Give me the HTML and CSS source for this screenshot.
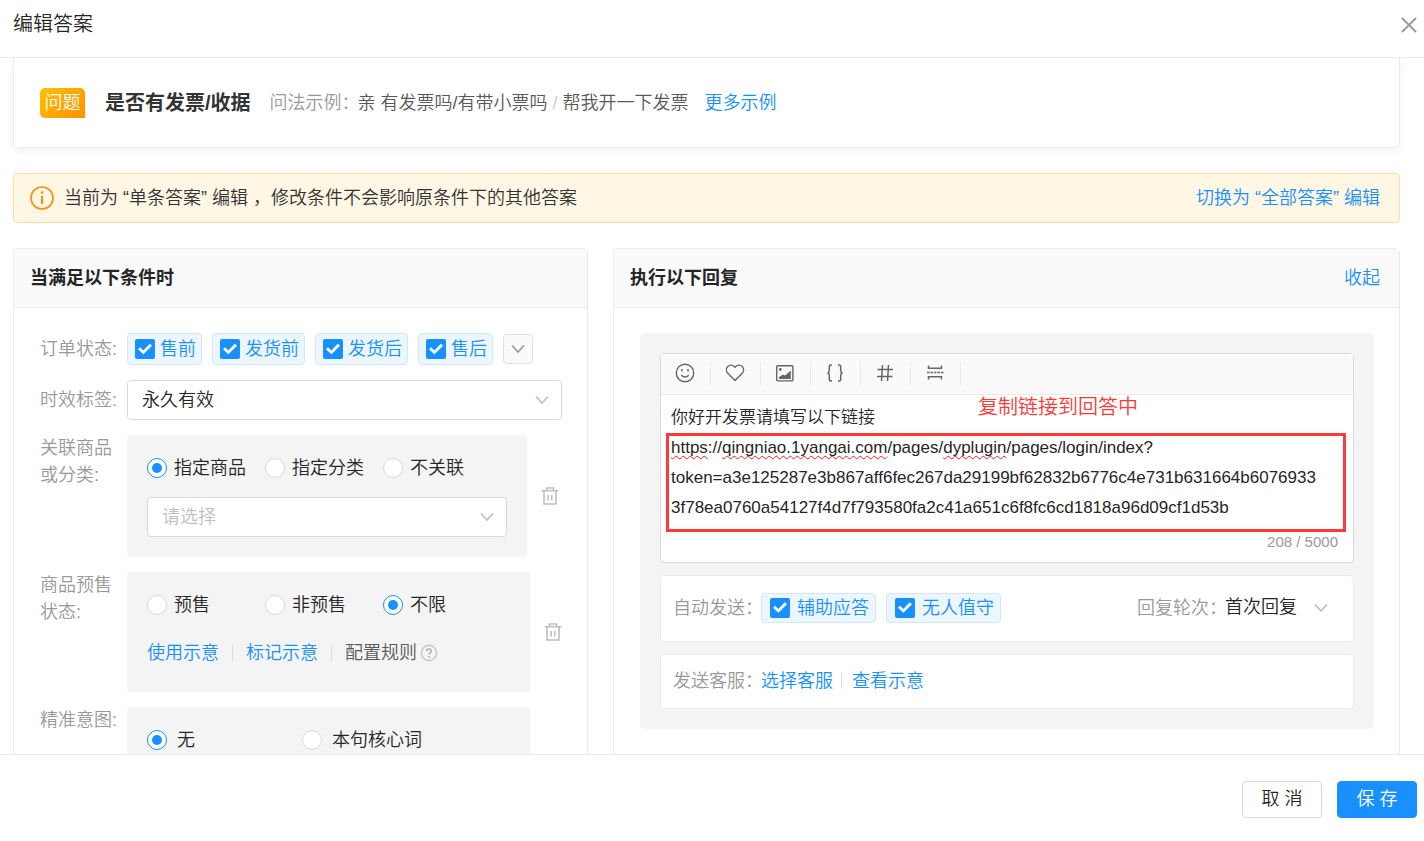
FILE: index.html
```html
<!DOCTYPE html>
<html lang="zh-CN">
<head>
<meta charset="utf-8">
<meta name="viewport" content="width=device-width, initial-scale=1">
<title>编辑答案</title>
<link rel="stylesheet" href="styles.css">
</head>
<body>
<svg class="sprite" aria-hidden="true">
  <symbol id="i-down" viewBox="0 0 14 14"><path d="M1 3.5l6 6.5 6-6.5" fill="none" stroke="currentColor" stroke-width="1.7"/></symbol>
  <symbol id="i-trash" viewBox="0 0 18 18"><path d="M.5 3.7h17M5.500 3.500V1h7v2.500M3 4v13h12V4M7.200 8v5.500M10.800 8v5.500" fill="none" stroke="currentColor" stroke-width="1.6"/></symbol>
</svg>

<header class="dialog-header">
  <h1 class="dialog-title">编辑答案</h1>
  <button class="icon-button close" type="button" aria-label="关闭">
    <svg width="16" height="16" viewBox="0 0 16 16"><path d="M1 1l14 14M15 1L1 15" fill="none" stroke="currentColor" stroke-width="1.8"/></svg>
  </button>
</header>

<main class="dialog-body">
  <section class="question">
    <span class="badge">问题</span>
    <h2 class="question-title">是否有发票/收据</h2>
    <span class="question-label">问法示例：</span>
    <span class="question-sample">亲 有发票吗/有带小票吗 <i class="slash">/</i> 帮我开一下发票</span>
    <a class="link" href="#">更多示例</a>
  </section>

  <div class="alert" role="status">
    <svg class="alert-icon" width="24" height="24" viewBox="0 0 24 24"><circle cx="12" cy="12" r="11" fill="none" stroke="currentColor" stroke-width="1.7"/><circle cx="12" cy="6.6" r="1.3" fill="currentColor"/><path d="M12 9.8v8.2" stroke="currentColor" stroke-width="2"/></svg>
    <p class="alert-text">当前为 “单条答案” 编辑 ，修改条件不会影响原条件下的其他答案</p>
    <a class="link" href="#">切换为 “全部答案” 编辑</a>
  </div>

  <div class="columns">
    <section class="panel">
      <header class="panel-header"><h2 class="panel-title">当满足以下条件时</h2></header>
      <form class="panel-body conditions">
        <div class="row row-center">
          <span class="row-label">订单状态:</span>
          <div class="chips">
            <label class="chip"><input class="check" type="checkbox" checked>售前</label>
            <label class="chip"><input class="check" type="checkbox" checked>发货前</label>
            <label class="chip"><input class="check" type="checkbox" checked>发货后</label>
            <label class="chip"><input class="check" type="checkbox" checked>售后</label>
            <button class="expand" type="button" aria-label="展开"><svg width="14" height="14"><use href="#i-down"/></svg></button>
          </div>
        </div>

        <div class="row row-center">
          <label class="row-label" for="validity">时效标签:</label>
          <div class="select-wrap">
            <select class="select" id="validity"><option>永久有效</option></select>
            <svg class="select-arrow" width="14" height="14"><use href="#i-down"/></svg>
          </div>
        </div>

        <div class="row">
          <span class="row-label">关联商品<br>或分类:</span>
          <div class="box">
            <div class="radios">
              <label class="radio-item"><input class="radio" type="radio" name="goods" checked>指定商品</label>
              <label class="radio-item"><input class="radio" type="radio" name="goods">指定分类</label>
              <label class="radio-item"><input class="radio" type="radio" name="goods">不关联</label>
            </div>
            <div class="select-wrap box-select">
              <select class="select placeholder" aria-label="关联商品"><option>请选择</option></select>
              <svg class="select-arrow" width="14" height="14"><use href="#i-down"/></svg>
            </div>
          </div>
          <button class="icon-button trash trash-wide" type="button" aria-label="删除"><svg width="18" height="18"><use href="#i-trash"/></svg></button>
        </div>

        <div class="row">
          <span class="row-label">商品预售<br>状态:</span>
          <div class="box">
            <div class="radios">
              <label class="radio-item"><input class="radio" type="radio" name="presale">预售</label>
              <label class="radio-item"><input class="radio" type="radio" name="presale">非预售</label>
              <label class="radio-item"><input class="radio" type="radio" name="presale" checked>不限</label>
            </div>
            <div class="hints">
              <a class="link" href="#">使用示意</a>
              <span class="divider"></span>
              <a class="link" href="#">标记示意</a>
              <span class="divider"></span>
              <span class="rule">配置规则
                <svg width="18" height="18" viewBox="0 0 18 18"><circle cx="9" cy="9" r="7.6" fill="none" stroke="#bfbfbf" stroke-width="1.2"/><path d="M6.7 7.2c0-3 4.6-3 4.6-.2 0 1.6-2.3 1.8-2.3 3.6" fill="none" stroke="#a6a6a6" stroke-width="1.3"/><circle cx="9" cy="12.8" r=".9" fill="#a6a6a6"/></svg>
              </span>
            </div>
          </div>
          <button class="icon-button trash" type="button" aria-label="删除"><svg width="18" height="18"><use href="#i-trash"/></svg></button>
        </div>

        <div class="row">
          <span class="row-label">精准意图:</span>
          <div class="box">
            <div class="radios radios-wide">
              <label class="radio-item"><input class="radio" type="radio" name="intent" checked>无</label>
              <label class="radio-item"><input class="radio" type="radio" name="intent">本句核心词</label>
            </div>
            <div class="hints"></div>
          </div>
          <button class="icon-button trash" type="button" aria-label="删除"><svg width="18" height="18"><use href="#i-trash"/></svg></button>
        </div>
      </form>
    </section>

    <section class="panel">
      <header class="panel-header">
        <h2 class="panel-title">执行以下回复</h2>
        <a class="link" href="#">收起</a>
      </header>
      <div class="panel-body">
        <div class="reply">
          <div class="editor">
            <div class="toolbar">
              <button class="tool" type="button" aria-label="表情"><svg width="20" height="20" viewBox="0 0 20 20"><g fill="none" stroke="currentColor" stroke-width="1.4"><circle cx="10" cy="10" r="8.7"/><path d="M6.3 12.2c1.4 2.4 6 2.4 7.4 0"/></g><path d="M7 6v2.6M13 6v2.6" stroke="currentColor" stroke-width="1.5"/></svg></button>
              <button class="tool" type="button" aria-label="收藏"><svg width="20" height="20" viewBox="0 0 20 20"><path d="M10 4.2C7.8 1.6 4.8 1.5 2.8 3.4.8 5.5 1 8.5 3 10.5l7 7 7-7c2-2 2.2-5 .2-7.1-2-1.9-5-1.8-7.2.8z" fill="none" stroke="currentColor" stroke-width="1.4" stroke-linejoin="round"/></svg></button>
              <button class="tool" type="button" aria-label="图片"><svg width="20" height="20" viewBox="0 0 20 20"><rect x="1.7" y="2.7" width="16.2" height="15.2" rx="1" fill="none" stroke="currentColor" stroke-width="1.4"/><circle cx="5.3" cy="6.5" r="1.4" fill="currentColor"/><path d="M4 16v-2l4-2.400 2 1 5.800-5V16z" fill="currentColor"/></svg></button>
              <button class="tool" type="button" aria-label="变量"><svg width="20" height="20" viewBox="0 0 20 20"><path d="M7 2H5.800C4.600 2 4.300 2.700 4.300 4v3.500C4.300 9 3.500 9.800 2.500 10c1 .2 1.800 1 1.800 2.500V16c0 1.300.3 2 1.500 2H7M13 2h1.200c1.200 0 1.500.7 1.500 2v3.500c0 1.500.8 2.300 1.800 2.500-1 .2-1.800 1-1.800 2.500V16c0 1.300-.3 2-1.500 2H13" fill="none" stroke="currentColor" stroke-width="1.5"/></svg></button>
              <button class="tool" type="button" aria-label="话题"><svg width="20" height="20" viewBox="0 0 20 20"><path d="M7.500 2l-1 16M13.500 2l-1 16M2.500 6.500h15.500M2 13.500h15.500" fill="none" stroke="currentColor" stroke-width="1.5"/></svg></button>
              <button class="tool" type="button" aria-label="分段"><svg width="20" height="20" viewBox="0 0 20 20"><g fill="none" stroke="currentColor" stroke-width="1.5"><path d="M3.500 2.500v2.800h13V2.500M3.500 16.500v-2.800h13v2.800"/><path d="M2 9.500h16.500" stroke-dasharray="2.500 1"/></g></svg></button>
            </div>
            <div class="editor-text" contenteditable="true" role="textbox" aria-multiline="true" aria-label="回复内容" spellcheck="false">你好开发票请填写以下链接<br><span class="typo">https</span>://<span class="typo">qingniao.1yangai.com</span>/pages/<span class="typo">dyplugin</span>/pages/login/index?<br>token=a3e125287e3b867aff6fec267da29199bf62832b6776c4e731b631664b6076933<br>3f78ea0760a54127f4d7f793580fa2c41a651c6f8fc6cd1818a96d09cf1d53b</div>
            <div class="counter">208 / 5000</div>
            <span class="note">复制链接到回答中</span>
            <span class="note-frame"></span>
          </div>

          <div class="card">
            <span class="card-label">自动发送：</span>
            <div class="chips">
              <label class="chip chip-roomy"><input class="check" type="checkbox" checked>辅助应答</label>
              <label class="chip chip-roomy"><input class="check" type="checkbox" checked>无人值守</label>
            </div>
            <div class="round">
              <label class="card-label" for="round">回复轮次：</label>
              <div class="select-wrap">
                <select class="select select-plain" id="round"><option>首次回复</option></select>
                <svg class="select-arrow" width="14" height="14"><use href="#i-down"/></svg>
              </div>
            </div>
          </div>

          <div class="card card-short">
            <span class="card-label">发送客服：</span>
            <a class="link" href="#">选择客服</a>
            <span class="divider divider-tight"></span>
            <a class="link" href="#">查看示意</a>
          </div>
        </div>
      </div>
    </section>
  </div>
</main>

<footer class="dialog-footer">
  <button class="button" type="button">取 消</button>
  <button class="button button-primary" type="button">保 存</button>
</footer>
</body>
</html>
```

FILE: styles.css
```css
* { box-sizing: border-box; }

body {
  display: flex;
  flex-direction: column;
  height: 100vh;
  margin: 0;
  overflow: hidden;
  background: #fff;
  color: #262626;
  font: 350 18px/26px "Liberation Sans", "Noto Sans CJK SC", sans-serif;
}

h1, h2, p { margin: 0; }
button, select, input { margin: 0; font: inherit; color: inherit; }
button { cursor: pointer; }
svg { display: block; flex: none; }

.sprite { position: absolute; width: 0; height: 0; }
.link { color: #1890ff; text-decoration: none; white-space: nowrap; }
.icon-button { padding: 0; border: 0; background: none; color: #bfbfbf; }

.dialog-header {
  display: flex;
  flex: none;
  align-items: center;
  justify-content: space-between;
  height: 58px;
  padding: 0 7px 10px 13px;
  border-bottom: 1px solid #ebebeb;
}
.dialog-title { font-size: 20px; font-weight: 350; line-height: 28px; }
.close { padding-top: 3px; color: #999; }

.dialog-body {
  flex: 1;
  min-height: 0;
  padding: 0 24px 0 13px;
  overflow: hidden;
}

.question {
  display: flex;
  align-items: center;
  padding: 30px 26px 29px;
  border: solid #ebebeb;
  border-width: 0 1px 1px;
  border-radius: 0 0 5px 5px;
  box-shadow: 0 3px 8px rgba(0, 0, 0, .06);
  white-space: nowrap;
}
.badge {
  width: 45px;
  margin-right: 20px;
  border-radius: 5px 5px 0 5px;
  background: linear-gradient(135deg, #ffc000, #ff9000);
  color: #fff;
  line-height: 30px;
  text-align: center;
}
.question-title { margin-right: 19px; color: #333; font-size: 20px; font-weight: 700; line-height: 28px; }
.question-label { width: 88px; color: #999; }
.question-sample { margin-right: 16px; color: #595959; }
.slash { color: #ccc; font-style: normal; }

.alert {
  display: flex;
  align-items: center;
  min-height: 50px;
  margin: 25px 0;
  padding: 0 19px 0 16px;
  border: 1px solid #ffe0a0;
  border-radius: 4px;
  background: #fff6e4;
}
.alert-icon { margin-right: 10px; color: #ff8f0f; }
.alert-text { flex: 1; color: #333; }

.columns { display: grid; grid-template-columns: 575fr 787fr; gap: 25px; }
.panel { min-width: 0; border: 1px solid #ebebeb; border-radius: 4px; }
.panel-header {
  display: flex;
  align-items: center;
  justify-content: space-between;
  height: 59px;
  padding: 0 19px 0 16px;
  border-bottom: 1px solid #ebebeb;
  background: #fafafa;
}
.panel-title { font-size: 18px; font-weight: 700; }
.panel-body { padding: 25px 25px 25px 26px; }

.conditions { display: flex; flex-direction: column; gap: 15px; }
.row { display: flex; }
.row-center { align-items: center; }
.row-label { flex: none; width: 87px; color: #999; line-height: 27px; white-space: nowrap; }

.chips { display: flex; align-items: center; gap: 10px; }
.chip {
  display: flex;
  align-items: center;
  gap: 5px;
  height: 32px;
  padding: 0 5px 0 7px;
  border: 1px solid #d0e8ff;
  border-radius: 4px;
  background: #ebf6ff;
  color: #1890ff;
  white-space: nowrap;
}
.chip-roomy { gap: 7px; height: 30px; padding: 0 6px 0 8px; }

.check {
  display: grid;
  place-items: center;
  width: 20px;
  height: 20px;
  border-radius: 2px;
  background: #1890ff;
  appearance: none;
}
.check::before {
  width: 14px;
  height: 12px;
  background: #fff;
  clip-path: polygon(0 52%, 15% 36%, 38% 62%, 84% 6%, 100% 22%, 39% 94%);
  content: "";
}

.expand {
  display: grid;
  place-items: center;
  width: 30px;
  height: 30px;
  padding: 0;
  border: 1px solid #e0e0e0;
  border-radius: 4px;
  background: #fafafa;
  color: #999;
}

.select-wrap { display: grid; flex: 1; align-items: center; }
.select {
  grid-area: 1 / 1;
  width: 100%;
  height: 40px;
  padding: 0 34px 0 14px;
  border: 1px solid #d9d9d9;
  border-radius: 4px;
  background: #fff;
  appearance: none;
}
.select-arrow { grid-area: 1 / 1; justify-self: end; margin-right: 13px; color: #bfbfbf; pointer-events: none; }
.placeholder { color: #bfbfbf; }
.select-plain { padding: 0 44px 2px 0; border: 0; }

.box { flex: 1; padding: 20px; border-radius: 4px; background: #f4f4f4; }
.box-select { margin-top: 16px; }
.radios { display: grid; grid-template-columns: repeat(3, 118px); }
.radios-wide { grid-template-columns: repeat(2, 155px); }
.radio-item { display: flex; align-items: center; gap: 7px; white-space: nowrap; }
.radios-wide .radio-item { gap: 10px; }
.radio {
  display: grid;
  place-items: center;
  width: 20px;
  height: 20px;
  border: 1px solid #d9d9d9;
  border-radius: 50%;
  background: #fff;
  appearance: none;
}
.radio:checked { border-color: #1890ff; }
.radio:checked::before { width: 10px; height: 10px; border-radius: 50%; background: #1890ff; content: ""; }

.hints { display: flex; align-items: center; min-height: 26px; margin: 22px 0 6px; }
.divider { width: 1px; height: 16px; margin: 0 13px; background: #dcdcdc; }
.divider-tight { margin: 0 10px 0 8px; }
.rule { display: flex; align-items: center; gap: 3px; color: #595959; white-space: nowrap; }
.trash { padding-left: 14px; }
.trash-wide { padding-right: 3px; }

.reply { display: flex; flex-direction: column; gap: 12px; padding: 20px; border-radius: 5px; background: #f4f4f4; }
.editor { position: relative; border: 1px solid #d9d9d9; border-radius: 4px; background: #fff; }
.toolbar { display: flex; align-items: center; height: 41px; border-bottom: 1px solid #ebebeb; background: #fafafa; }
.tool {
  display: grid;
  place-items: center;
  width: 50px;
  height: 24px;
  padding: 0 2px 2px 0;
  border: 0;
  border-right: 1px solid #ebebeb;
  background: none;
  color: #666;
}
.editor-text { padding: 8px 10px 0; font-size: 17px; line-height: 30px; white-space: nowrap; outline: 0; }
.typo { text-decoration: underline wavy #f02020 1px; text-underline-offset: 2px; text-decoration-skip-ink: none; }
.counter { margin: 9px 15px 10px; color: #999; font-size: 15px; line-height: 20px; text-align: right; }
.note { position: absolute; top: 39px; right: 215px; color: #ff3838; font-size: 20px; line-height: 28px; }
.note-frame { position: absolute; top: 79px; right: 7px; left: 5px; height: 99px; border: 3px solid #ff3838; pointer-events: none; }

.card {
  display: flex;
  align-items: center;
  height: 67px;
  padding: 0 12px 2px;
  border: 1px solid #ebebeb;
  border-radius: 4px;
  background: #fff;
}
.card-short { height: 55px; }
.card-label { flex: none; width: 88px; color: #999; white-space: nowrap; }
.round { display: flex; align-items: center; margin-left: auto; }

.dialog-footer {
  display: flex;
  flex: none;
  justify-content: flex-end;
  gap: 15px;
  padding: 26px 7px 23px;
  border-top: 1px solid #ebebeb;
}
.button {
  width: 80px;
  height: 37px;
  padding: 0 0 2px;
  border: 1px solid #d9d9d9;
  border-radius: 4px;
  background: #fff;
}
.button-primary { border-color: #1890ff; background: #1890ff; color: #fff; }
```
